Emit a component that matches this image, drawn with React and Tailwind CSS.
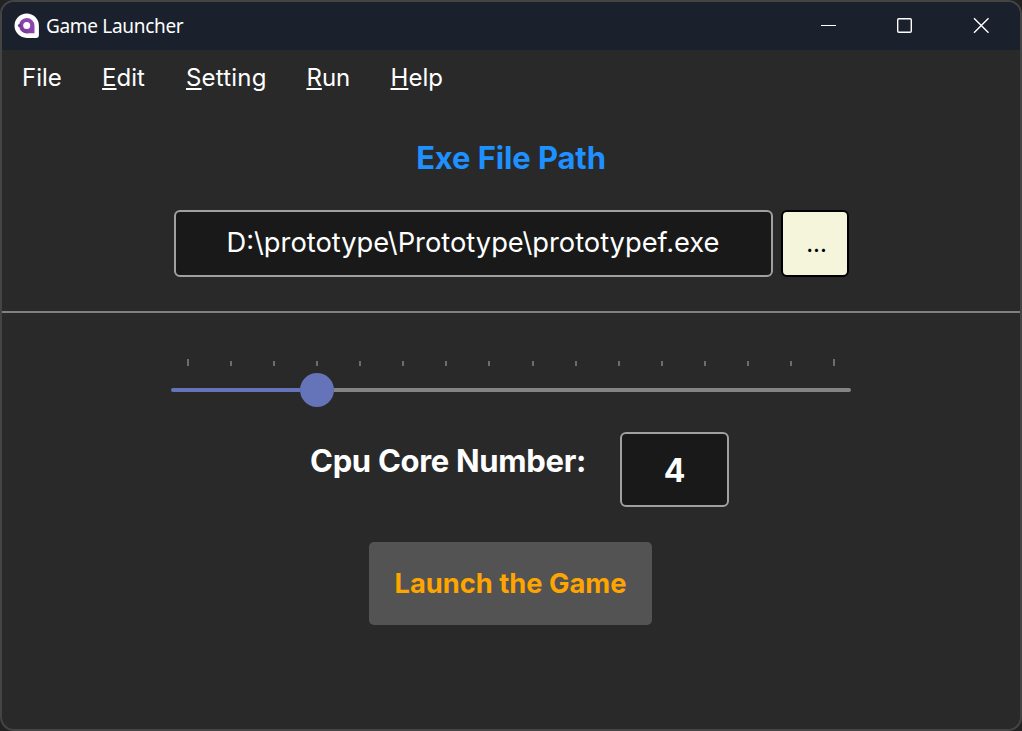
const menus = ['File', 'Edit', 'Setting', 'Run', 'Help'];

function Logo() {
  return (
    <svg className="h-[26px] w-[26px] shrink-0" viewBox="0 0 26 26">
      <defs>
        <linearGradient id="logo-fill" x1="0" y1="1" x2="1" y2="0">
          <stop offset="0" stopColor="#6a3590" />
          <stop offset="0.5" stopColor="#8b44ac" />
          <stop offset="1" stopColor="#9248b2" />
        </linearGradient>
      </defs>
      <path d="M12.700 0.500A12.200 12.200 0 0 0 12.700 24.900H22.500A2.400 2.400 0 0 0 24.900 22.500V12.700A12.200 12.200 0 0 0 12.700 .5Z" fill="#fff" />
      <path d="M12.700 5A7.700 7.700 0 1 0 14.500 20.200H20.500V12.700A7.800 7.800 0 0 0 12.700 5Z" fill="url(#logo-fill)" />
      <circle cx="12.700" cy="12.600" r="3.500" fill="#fff" />
      <circle cx="5.400" cy="12.600" r="1.500" fill="#6a3590" />
    </svg>
  );
}

function TitleBar() {
  return (
    <header className="flex h-12 shrink-0 items-center bg-[#1b212c] pl-3">
      <Logo />
      <span className="ml-[6px] font-['Noto_Sans',sans-serif] text-[19px] leading-6 tracking-[-0.31px]">Game Launcher</span>
      <div className="ml-auto flex h-full items-center">
        <svg className="h-12 w-[76px]" viewBox="0 0 76 48" fill="none" stroke="#fff">
          <path d="M31 23.500H46" />
        </svg>
        <svg className="h-12 w-[77px]" viewBox="0 0 77 48" fill="none" stroke="#fff" strokeWidth="1.400">
          <rect x="31.700" y="16.700" width="13.600" height="13.600" rx="1.200" />
        </svg>
        <svg className="h-12 w-[77px]" viewBox="0 0 77 48" fill="none" stroke="#fff" strokeWidth="1.400">
          <path d="M31 16.300L45.500 30.800M45.500 16.300L31 30.800" />
        </svg>
      </div>
    </header>
  );
}

function CoreSlider() {
  return (
    <div className="mx-auto mt-[46px] w-[680px]">
      <div className="flex h-[7px] items-end justify-between px-4">
        {Array.from({ length: 16 }, (_, i) => (
          <span key={i} className="h-[5px] w-[2px] bg-[#6c6c6c] first:h-[7px] last:h-[7px]" />
        ))}
      </div>
      <div className="mt-[7px] flex h-[34px] items-center">
        <div className="h-1 w-[129px] rounded-l-full bg-[#6573b8]" />
        <div className="size-[34px] rounded-full bg-[#6573b8]" />
        <div className="h-1 flex-1 rounded-r-full bg-[#868383]" />
      </div>
    </div>
  );
}

export default function App() {
  return (
    <div className="h-[731px] w-[1022px] overflow-hidden bg-[#222222] font-['Inter',sans-serif] text-white">
      <div className="flex h-full flex-col overflow-hidden rounded-[14px] border-2 border-[#444444] bg-[#292929]">
        <TitleBar />
        <nav className="flex h-14 shrink-0 items-center gap-[40.3px] pl-5 text-2xl">
          {menus.map((m, i) => (
            <span key={m} className={m === 'Setting' ? '-mr-[0.500px] ml-[0.800px] whitespace-nowrap tracking-[0.2px]' : 'whitespace-nowrap'}>
              {i === 0 ? m : <><span className="underline decoration-[1.500px] underline-offset-[2px] [text-decoration-skip-ink:none]">{m[0]}</span>{m.slice(1)}</>}
            </span>
          ))}
        </nav>
        <h1 className="mt-[32px] h-10 text-center text-[31px] leading-10 font-bold tracking-[-0.12px] text-[#1e90ff]">Exe File Path</h1>
        <div className="mt-8 flex h-[67px] shrink-0 justify-center gap-2">
          <div className="flex w-[599px] items-center justify-center rounded-md border-2 border-[#a0a0a0] bg-[#191919] pb-[1px] text-[27.300px]">D:\prototype\Prototype\prototypef.exe</div>
          <button className="w-[68px] rounded-md border-2 border-black bg-[#f5f5dc] pl-[4px] text-2xl text-black">...</button>
        </div>
        <div className="mt-[34px] h-[2px] shrink-0 bg-[#808080]" />
        <CoreSlider />
        <div className="mt-[25px] flex h-[75px] shrink-0 pl-[308px]">
          <span className="mt-[9px] w-[310px] text-[31px] leading-10 font-bold tracking-[-0.3px]">Cpu Core Number:</span>
          <div className="flex w-[109px] items-center justify-center rounded-md border-2 border-[#a0a0a0] bg-[#191919] pt-[2px] text-[32px] font-bold">4</div>
        </div>
        <button className="mt-[35px] ml-[367px] h-[83px] w-[283px] shrink-0 rounded-[5px] bg-[#535353] pt-[2px] text-[27.300px] font-bold text-[#ffa500]">Launch the Game</button>
      </div>
    </div>
  );
}
